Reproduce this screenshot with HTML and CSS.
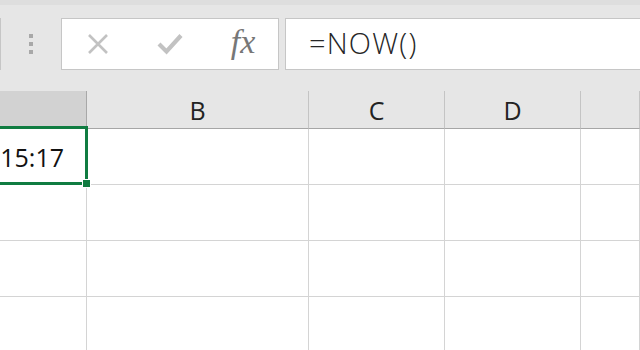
FILE: index.html
```html
<!DOCTYPE html>
<html>

<head>
     <title> NOW </title>
     <link rel="stylesheet" href="styles.css">
</head>

<body>
     <div class="ribbon">
          <div class="formula-bar">
               <div class="name-box"></div>
               <div class="grip">
                    <span></span>
                    <span></span>
                    <span></span>
               </div>
               <div class="fx-box">
                    <div class="fx-btn">
                         <svg width="22" height="20" viewBox="0 0 22 20">
                              <path d="M2 1 L20 19 M20 1 L2 19" stroke="#c2c2c2" stroke-width="2.6" fill="none" />
                         </svg>
                    </div>
                    <div class="fx-btn">
                         <svg width="26" height="22" viewBox="0 0 26 22">
                              <path d="M2 11 L9.5 18.5 L24 2.5" stroke="#c2c2c2" stroke-width="4.2" fill="none" />
                         </svg>
                    </div>
                    <div class="fx-btn"><span class="fx">fx</span></div>
               </div>
               <div class="formula-input">=NOW()</div>
          </div>
     </div>

     <div class="sheet">
          <div class="head sel"></div>
          <div class="head">B</div>
          <div class="head">C</div>
          <div class="head">D</div>
          <div class="head"></div>

          <div class="cell time">
               15:17
               <div class="selection"><div class="handle"></div></div>
          </div>
          <div class="cell"></div>
          <div class="cell"></div>
          <div class="cell"></div>
          <div class="cell"></div>

          <div class="cell"></div>
          <div class="cell"></div>
          <div class="cell"></div>
          <div class="cell"></div>
          <div class="cell"></div>

          <div class="cell"></div>
          <div class="cell"></div>
          <div class="cell"></div>
          <div class="cell"></div>
          <div class="cell"></div>

          <div class="cell"></div>
          <div class="cell"></div>
          <div class="cell"></div>
          <div class="cell"></div>
          <div class="cell"></div>
     </div>
</body>

</html>
```

FILE: styles.css
```css
* {
     box-sizing: border-box;
}

body {
     margin: 0;
     width: 640px;
     height: 350px;
     overflow: hidden;
     background-color: #ffffff;
     font-family: "Open Sans", "Noto Sans", sans-serif;
}

/* top bar */

.ribbon {
     height: 91px;
     background-color: #e6e6e6;
     border-top: 5px solid #dedede;
     padding-top: 13px;
}

.formula-bar {
     display: flex;
     height: 52px;
}

.name-box {
     width: 41px;
     margin-left: -40px;
     background-color: #ffffff;
     border: 1px solid #c6c6c6;
}

.grip {
     width: 60px;
     display: flex;
     flex-direction: column;
     align-items: center;
     justify-content: center;
     gap: 4px;
}

.grip span {
     width: 4px;
     height: 4px;
     background-color: #a8a8a8;
}

.fx-box {
     width: 218px;
     display: flex;
     background-color: #ffffff;
     border: 1px solid #c6c6c6;
}

.fx-btn {
     width: 72px;
     display: flex;
     align-items: center;
     justify-content: center;
}

.fx {
     font-family: "Liberation Serif", serif;
     font-style: italic;
     font-size: 34px;
     color: #777777;
     margin-top: -4px;
     margin-left: 2px;
}

.formula-input {
     flex: 1;
     margin-left: 6px;
     margin-right: -10px;
     background-color: #ffffff;
     border: 1px solid #c6c6c6;
     padding-left: 23px;
     padding-bottom: 4px;
     display: flex;
     align-items: center;
     font-size: 29px;
     font-weight: 300;
     letter-spacing: 1.2px;
     color: #262626;
}

/* grid */

.sheet {
     display: grid;
     grid-template-columns: 87px 222px 136px 136px 1fr;
     grid-template-rows: 38px 56px 56px 56px 56px;
}

.head {
     background-color: #e6e6e6;
     border-right: 1px solid #c4c4c4;
     border-bottom: 1px solid #a6a6a6;
     display: flex;
     align-items: center;
     justify-content: center;
     font-size: 25px;
     color: #222222;
}

.head.sel {
     background-color: #d2d2d2;
     border-right-color: #a8a8a8;
}

.cell {
     border-right: 1px solid #d4d4d4;
     border-bottom: 1px solid #d4d4d4;
}

.cell.time {
     position: relative;
     display: flex;
     align-items: center;
     justify-content: flex-end;
     padding-right: 22px;
     font-size: 25px;
     color: #111111;
}

.selection {
     position: absolute;
     top: -3px;
     bottom: -1px;
     left: -3px;
     right: -2px;
     border: 3px solid #107c41;
}

.handle {
     position: absolute;
     right: -6px;
     bottom: -6px;
     width: 9px;
     height: 9px;
     background-color: #107c41;
     border: 1px solid #ffffff;
}
```
